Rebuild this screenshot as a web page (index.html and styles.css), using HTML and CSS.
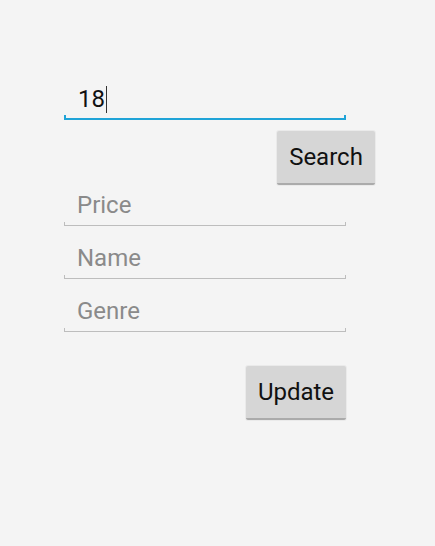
FILE: index.html
```html
<!DOCTYPE html>
<html>
<head>
<meta charset="utf-8">
<link rel="stylesheet" href="styles.css">
</head>
<body>
<div class="form">
  <div class="field field-active">
    <span class="value">18</span><span class="cursor"></span>
  </div>
  <div class="row row-search">
    <button class="btn btn-search">Search</button>
  </div>
  <div class="field field-first">
    <span class="hint">Price</span>
  </div>
  <div class="field">
    <span class="hint">Name</span>
  </div>
  <div class="field">
    <span class="hint">Genre</span>
  </div>
  <div class="row row-update">
    <button class="btn btn-update">Update</button>
  </div>
</div>
</body>
</html>
```
FILE: styles.css
```css
html, body {
  margin: 0;
  padding: 0;
  background: #f4f4f4;
  height: 100%;
}
body {
  font-family: Roboto, "Liberation Sans", sans-serif;
}
.form {
  margin-left: 64px;
  width: 311px;
  display: flex;
  flex-direction: column;
  padding-top: 74px;
}
.field {
  position: relative;
  box-sizing: border-box;
  width: 282px;
  height: 53px;
  display: flex;
  align-items: flex-end;
  padding: 0 13px 7px 13px;
  border-bottom: 1px solid #bdbdbd;
  font-size: 24px;
  line-height: 26px;
}
.field::before,
.field::after {
  content: "";
  position: absolute;
  bottom: -1px;
  width: 1px;
  height: 4px;
  background: #bdbdbd;
}
.field::before { left: 0; }
.field::after { right: 0; }
.field-first {
  height: 41px;
}
.field-active {
  height: 46px;
  padding-bottom: 6px;
  padding-left: 14px;
  border-bottom: 2px solid #1fa3d7;
}
.field-active::before,
.field-active::after {
  bottom: -2px;
  width: 2px;
  height: 5px;
  background: #1fa3d7;
}
.value {
  color: #111;
}
.cursor {
  display: inline-block;
  width: 1px;
  height: 27px;
  background: #333;
  margin-left: 1px;
  align-self: flex-end;
  margin-bottom: -1px;
}
.hint {
  color: #8a8a8a;
}
.row {
  display: flex;
  justify-content: flex-end;
}
.row-search {
  margin-top: 11px;
}
.row-update {
  width: 282px;
  margin-top: 34px;
}
.btn {
  box-sizing: border-box;
  height: 54px;
  border: none;
  border-radius: 2px;
  background: #d6d6d6;
  border-bottom: 2px solid #ababab;
  box-shadow: 0 0 0 1px rgba(0, 0, 0, 0.04);
  font-family: Roboto, "Liberation Sans", sans-serif;
  font-size: 24px;
  color: #111;
  padding: 0;
}
.btn-search {
  width: 98px;
}
.btn-update {
  width: 100px;
}
```
